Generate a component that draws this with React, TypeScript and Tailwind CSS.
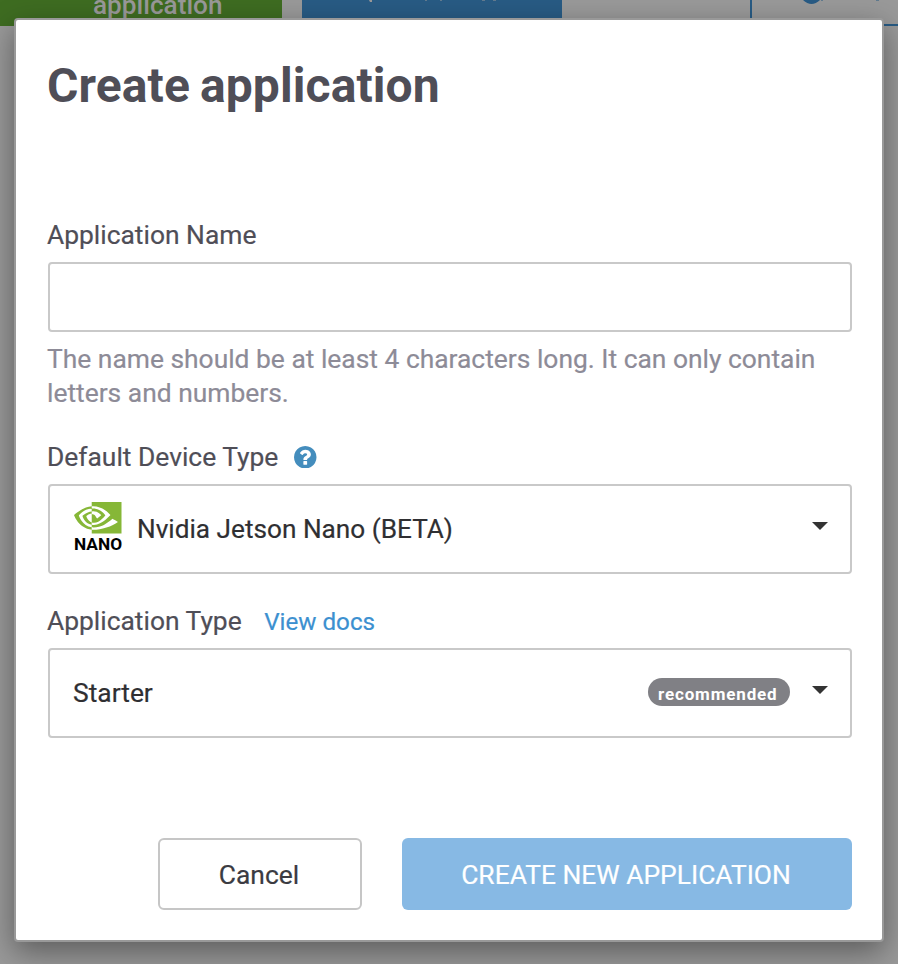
import { SiNvidia } from "react-icons/si";

function Caret() {
  return (
    <svg className="h-2 w-4 shrink-0 text-[#333]" viewBox="0 0 16 8" fill="currentColor">
      <path d="M0 0h16L8 8z" />
    </svg>
  );
}

function HelpIcon() {
  return (
    <svg className="ml-4 size-[22.5px] text-[#448dbd]" viewBox="128 128 1536 1536" fill="currentColor">
      <path d="M1024 1376v-192q0-14-9-23t-23-9h-192q-14 0-23 9t-9 23v192q0 14 9 23t23 9h192q14 0 23-9t9-23zm256-672q0-88-55.5-163t-138.5-116-170-41q-243 0-371 213-15 24 8 42l132 100q7 6 19 6 16 0 25-12 53-68 86-92 34-24 86-24 48 0 85.5 26t37.5 59q0 38-20 61t-68 45q-63 28-115.5 86.5t-52.5 125.5v36q0 14 9 23t23 9h192q14 0 23-9t9-23q0-19 21.5-49.5t54.5-49.5q32-18 49-28.5t46-35 44.5-48 28-60.5 12.5-81zm384 192q0 209-103 385.5t-279.5 279.5-385.5 103-385.5-103-279.5-279.5-103-385.5 103-385.5 279.5-279.5 385.5-103 385.5 103 279.5 279.5 103 385.5z" />
    </svg>
  );
}

function Backdrop() {
  return (
    <div className="absolute inset-0 bg-[#999]">
      <div className="flex h-[26px] items-start">
        <div className="h-[26px] w-[282px] bg-[#3e6c21] pl-[93px]">
          <span className="-mt-[11px] block text-[26.2px] leading-8 font-medium text-[#999]">application</span>
        </div>
        <div className="ml-5 h-[26px] w-[260px] bg-[#285b84]">
          <svg className="block h-1 w-[260px]" viewBox="0 0 260 4" fill="#999">
            <path d="M67 0h3v2h-2zM70 1v1h-1z" />
            <path d="M123 0h2v1h-2zM138 0h2v1h-2zM180 0h3v1h-3zM191 0h3v1h-3z" opacity=".5" />
          </svg>
        </div>
        <div className="ml-[188px] h-[26px] flex-1 border-b-2 border-l-2 border-[#285b84]">
          <svg className="block h-1 w-[146px]" viewBox="0 0 146 4" fill="#285b84">
            <path d="M51 0h17q-8.500 8-17 0z" />
            <path d="M69 0h2v1h-2zM124 0h3v1h-3z" opacity=".5" />
          </svg>
        </div>
      </div>
    </div>
  );
}

export default function App() {
  return (
    <div className="relative h-[964px] w-[898px] overflow-hidden font-[Roboto,sans-serif] text-[26.4px] text-[#4f4e57] antialiased">
      <Backdrop />
      <div
        role="dialog"
        className="absolute top-[18px] left-[14px] flex h-[924px] w-[870px] flex-col rounded-[4px] border-2 border-[#999] bg-white pr-[30px] pl-8 shadow-[0_10px_30px_rgba(0,0,0,0.4)]"
      >
        <h1 className="-ml-px mt-[38px] h-14 text-[48px] leading-14 font-bold [word-spacing:-2px] tracking-[0.1px]">
          Create application
        </h1>

        <label className="-ml-px mt-[104px] h-[34px] leading-[34px] [-webkit-text-stroke:0.2px]">Application Name</label>
        <input className="mt-[10px] h-[70px] w-full shrink-0 rounded-[4px] border-2 border-[#c9c9c9] px-6 outline-none" />
        <p className="-ml-px mt-[10px] leading-[34px] text-[#8d8b97] [-webkit-text-stroke:0.2px]">
          The name should be at least 4 characters long. It can only contain
          <br />
          letters and numbers.
        </p>

        <div className="-ml-px mt-[30px] flex h-[34px] items-center leading-[34px] [-webkit-text-stroke:0.2px]">
          <span>Default Device Type</span>
          <HelpIcon />
        </div>
        <div className="mt-[10px] flex h-[90px] shrink-0 items-center rounded-[4px] border-2 border-[#c9c9c9] pr-[22px] pl-6 text-[#2f2f32]">
          <div className="-mt-1 flex w-12 flex-col">
            <div className="relative h-8 w-12">
              <SiNvidia className="absolute -top-2 left-0 size-[47.5px] text-[#86b737]" />
            </div>
            <span className="mt-0.5 h-4 text-[17.3px] leading-4 font-bold text-black">NANO</span>
          </div>
          <span className="ml-[15px] flex-1 text-[26.2px] leading-[34px] [-webkit-text-stroke:0.2px]">
            Nvidia Jetson Nano (BETA)
          </span>
          <div className="-mt-[7px] flex">
            <Caret />
          </div>
        </div>

        <div className="-ml-px mt-[30px] flex h-[34px] items-center leading-[34px] [-webkit-text-stroke:0.2px]">
          <span>Application Type</span>
          <a className="mt-0.5 ml-[22.5px] text-[24.2px] text-[#3c90d0]">View docs</a>
        </div>
        <div className="mt-[10px] flex h-[90px] shrink-0 items-center rounded-[4px] border-2 border-[#c9c9c9] pr-[22px] pl-[23px] text-[#2f2f32]">
          <span className="flex-1 leading-[34px] [-webkit-text-stroke:0.2px]">Starter</span>
          <span className="mr-[22px] mb-0.5 h-7 w-[142px] rounded-full bg-[#808085] pl-[10px] text-[17px] leading-[32px] font-bold tracking-[0.85px] text-white">
            recommended
          </span>
          <div className="-mt-[7px] flex">
            <Caret />
          </div>
        </div>

        <div className="mt-[100px] flex h-[72px] justify-end gap-10">
          <button className="w-[204px] rounded-[6px] border-2 border-[#c6c6c6] pt-1 pr-0.5 text-[#3b3b42] [-webkit-text-stroke:0.2px]">
            Cancel
          </button>
          <button className="w-[450px] rounded-[6px] bg-[#87b9e4] pt-1 pr-0.5 text-white [-webkit-text-stroke:0.2px]">
            CREATE NEW APPLICATION
          </button>
        </div>
      </div>
    </div>
  );
}
